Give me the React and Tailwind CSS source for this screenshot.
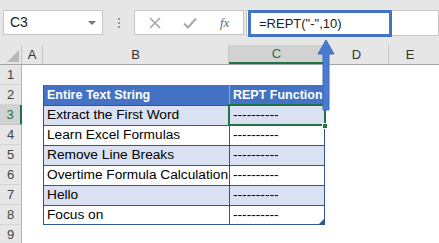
const ROWS = [
  { n: 3, b: "Extract the First Word", shade: true, active: true },
  { n: 4, b: "Learn Excel Formulas" },
  { n: 5, b: "Remove Line Breaks", shade: true },
  { n: 6, b: "Overtime Formula Calculation" },
  { n: 7, b: "Hello", shade: true },
  { n: 8, b: "Focus on", last: true },
];

const RowHead = ({ n, active }) => (
  <div
    className={
      active
        ? "w-[22px] shrink-0 flex items-center justify-center bg-[#d2d2d2] text-[#217346] border-r-2 border-r-[#217346] border-b border-b-[#c8c8c8] text-[13px]"
        : "w-[22px] shrink-0 flex items-center justify-center bg-[#e6e6e6] text-[#444] border-r border-r-[#b4b4b4] border-b border-b-[#d4d4d4] text-[13px]"
    }
  >
    {n}
  </div>
);

export default function App() {
  return (
    <div className="relative w-[439px] h-[243px] overflow-hidden bg-white font-['Liberation_Sans',Arial,sans-serif] text-black">
      {/* formula bar */}
      <div className="flex h-[45px] items-start bg-[#e6e6e6] pt-[10px]">
        <div className="ml-[3px] flex h-[25px] w-[100px] items-center justify-between border border-[#c6c6c6] bg-white pl-[6px] pr-[6px] text-[14px] text-[#222]">
          <span>C3</span>
          <span className="h-0 w-0 border-x-[4px] border-t-[4px] border-x-transparent border-t-[#777]" />
        </div>
        <div className="flex w-[31px] flex-col items-center gap-[2px] pt-[8px]">
          <span className="h-[2px] w-[2px] bg-[#999]" />
          <span className="h-[2px] w-[2px] bg-[#999]" />
          <span className="h-[2px] w-[2px] bg-[#999]" />
        </div>
        <div className="flex h-[25px] w-[110px] items-center border border-[#c6c6c6] bg-white">
          <svg width="12" height="12" viewBox="0 0 12 12" className="ml-[14px]">
            <path d="M1 1L11 11M11 1L1 11" stroke="#a8a8a8" strokeWidth="1.6" fill="none" />
          </svg>
          <svg width="14" height="12" viewBox="0 0 14 12" className="ml-[22px]">
            <path d="M1 6.5L5 10.5L13 1.5" stroke="#a8a8a8" strokeWidth="2" fill="none" />
          </svg>
          <span className="ml-[23px] font-['Liberation_Serif',serif] text-[13px] italic text-[#666]">fx</span>
        </div>
        <div className="ml-[2px] flex h-[26px] flex-1 border border-[#c6c6c6] bg-white">
          <div className="-mt-px ml-[1px] flex h-[27px] w-[144px] items-center border-[3px] border-[#4472c4] pl-[8px] text-[13px] text-[#222]">
            =REPT("-",10)
          </div>
        </div>
      </div>

      {/* column headers */}
      <div className="flex h-[20px] bg-[#e6e6e6] text-[13px] text-[#333] border-b border-b-[#a6a6a6]">
        <div className="relative w-[22px] shrink-0 border-r border-r-[#c6c6c6]">
          <svg className="absolute bottom-[2px] right-[2px]" width="12" height="12" viewBox="0 0 12 12">
            <path d="M12 0V12H0Z" fill="#b8b8b8" />
          </svg>
        </div>
        <div className="flex w-[21px] shrink-0 items-center justify-center border-r border-r-[#c6c6c6]">A</div>
        <div className="flex w-[186px] shrink-0 items-center justify-center border-r border-r-[#c6c6c6]">B</div>
        <div className="flex w-[95px] shrink-0 items-center justify-center bg-[#d2d2d2] text-[#217346] border-b-2 border-b-[#217346]">C</div>
        <div className="flex w-[65px] shrink-0 items-center justify-center border-r border-r-[#c6c6c6] border-l border-l-[#c6c6c6]">D</div>
        <div className="flex flex-1 items-center justify-center pr-[8px]">E</div>
      </div>

      {/* row 1 */}
      <div className="flex h-[20px]">
        <RowHead n={1} />
      </div>

      {/* row 2: table header */}
      <div className="flex h-[20px]">
        <RowHead n={2} />
        <div className="w-[21px] shrink-0" />
        <div className="flex w-[186px] shrink-0 items-center whitespace-nowrap bg-[#4472c4] pl-[3px] text-[12.5px] font-bold text-white border-l border-l-[#2f5597]">
          Entire Text String
        </div>
        <div className="flex w-[96px] shrink-0 items-center whitespace-nowrap bg-[#4472c4] pl-[3px] text-[12.5px] font-bold text-white border-l border-l-[#8eaadb]">
          REPT Function
        </div>
      </div>

      {ROWS.map((r) => (
        <div key={r.n} className="flex h-[20px]">
          <RowHead n={r.n} active={r.active} />
          <div className="w-[21px] shrink-0" />
          <div
            className={`flex w-[186px] shrink-0 items-center overflow-hidden whitespace-nowrap pl-[3px] text-[13.7px] border-l border-t border-[#2f5597] ${r.last ? "border-b" : ""} ${r.shade ? "bg-[#d9e1f2]" : "bg-white"}`}
          >
            {r.b}
          </div>
          <div
            className={`relative flex w-[96px] shrink-0 items-center pl-[3px] text-[13.7px] border-l border-r border-t border-[#2f5597] ${r.last ? "border-b" : ""} ${r.shade ? "bg-[#d9e1f2]" : "bg-white"}`}
          >
            ----------
            {r.last && (
              <svg className="absolute bottom-0 right-0" width="5" height="5" viewBox="0 0 5 5">
                <path d="M5 0V5H0Z" fill="#2f5597" />
              </svg>
            )}
          </div>
        </div>
      ))}

      <div className="flex h-[20px]">
        <RowHead n={9} />
      </div>

      {/* active cell selection */}
      <div className="absolute left-[228px] top-[104px] h-[22px] w-[98px] border-2 border-[#217346]" />
      <div className="absolute left-[322px] top-[123px] h-[6px] w-[6px] border border-white bg-[#217346]" />

      {/* annotation arrow */}
      <svg className="absolute left-[316px] top-[38px]" width="20" height="74" viewBox="0 0 20 74">
        <path d="M10 2L18 16H13V72H7V16H2Z" fill="#4a7bd0" stroke="#3f6dbf" strokeWidth="1" />
      </svg>
    </div>
  );
}
